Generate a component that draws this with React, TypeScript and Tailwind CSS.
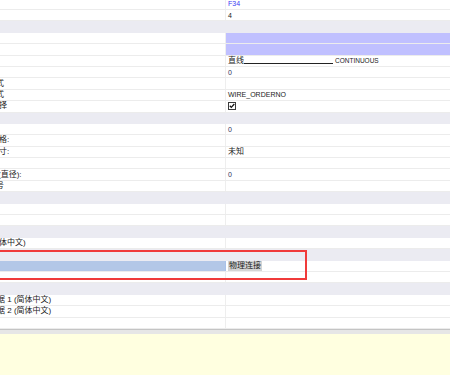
import type { ReactNode } from "react";

type Row = {
  band?: boolean;
  left?: string;
  shift?: string;
  right?: ReactNode;
  rightClass?: string;
  selected?: boolean;
};

const cjk = "text-[8px] leading-none";
const latin = "text-[7px] leading-none";

const Checkbox = () => (
  <span className="flex h-[8px] w-[8px] items-center justify-center border border-[#3a3a3a] bg-white">
    <svg width="6" height="6" viewBox="0 0 6 6">
      <path d="M0.8 2.8 L2.3 4.4 L5.3 1" stroke="#111" strokeWidth="1.3" fill="none" />
    </svg>
  </span>
);

const rows: Row[] = [
  { right: <span className={`${latin} text-[#3c3cf2]`}>F34</span> },
  { right: <span className={latin}>4</span> },
  { band: true },
  { rightClass: "bg-[#c0c0ff]" },
  { rightClass: "bg-[#c0c0ff]" },
  {
    right: (
      <span className="flex items-end">
        <span className={cjk}>直线</span>
        <span className="mb-[1px] h-px w-[89px] bg-[#222]" />
        <span className="ml-[2px] text-[6.5px] leading-none">CONTINUOUS</span>
      </span>
    ),
  },
  { right: <span className={`${latin} text-[#303058]`}>0</span> },
  { left: "式", shift: "-ml-[4px]" },
  { left: "式", shift: "-ml-[4px]", right: <span className={latin}>WIRE_ORDERNO</span> },
  { left: "择", shift: "-ml-[1px]", right: <Checkbox /> },
  { band: true },
  { right: <span className={`${latin} text-[#303058]`}>0</span> },
  { left: "格:", shift: "-ml-[1px]" },
  { left: "寸:", shift: "-ml-[1px]", right: <span className={cjk}>未知</span> },
  {},
  { left: "(直径):", shift: "-ml-[2px]", right: <span className={`${latin} text-[#303058]`}>0</span> },
  { left: "号", shift: "-ml-[4px]" },
  { band: true },
  {},
  {},
  { band: true },
  { left: "体中文)", shift: "-ml-[1px]" },
  { band: true },
  {
    selected: true,
    right: <span className={`${cjk} bg-[#d4d4d4] px-[1px] py-[1px]`}>物理连接</span>,
  },
  {},
  { band: true },
  { left: "据 1 (简体中文)", shift: "-ml-[3px]" },
  { left: "据 2 (简体中文)", shift: "-ml-[3px]" },
  {},
];

function GridRow({ row }: { row: Row }) {
  if (row.band) {
    return <div className="h-[11.4px] bg-[#ebebf2]" />;
  }
  return (
    <div className="flex h-[11.4px] border-b border-[#ececec]">
      <div
        className={`flex w-[225px] shrink-0 items-center overflow-hidden whitespace-nowrap ${
          row.selected ? "bg-[#b3c7e7]" : ""
        }`}
      >
        {row.left && <span className={`${cjk} ${row.shift ?? ""}`}>{row.left}</span>}
      </div>
      <div className={`w-px shrink-0 ${row.selected ? "bg-[#a9c2ea]" : "bg-[#eeeeee]"}`} />
      <div className={`flex flex-1 items-center pl-[2px] ${row.rightClass ?? ""}`}>
        {row.right}
      </div>
    </div>
  );
}

export default function App() {
  return (
    <div
      className="relative h-[375px] w-[450px] overflow-hidden bg-white text-[#222]"
      style={{ fontFamily: '"Liberation Sans", "Noto Sans CJK SC", sans-serif' }}
    >
      <div className="-mt-[1.4px]">
        {rows.map((row, i) => (
          <GridRow key={i} row={row} />
        ))}
      </div>
      <div className="border-t border-[#c4c4c4]" />
      <div className="h-[4px] bg-[#e6e6e6]" />
      <div className="h-[60px] bg-[#ffffe0]" />

      {/* annotation box */}
      <div className="absolute left-[-3px] top-[250px] h-[30px] w-[310px] border-2 border-[#f03a3a]" />
    </div>
  );
}
